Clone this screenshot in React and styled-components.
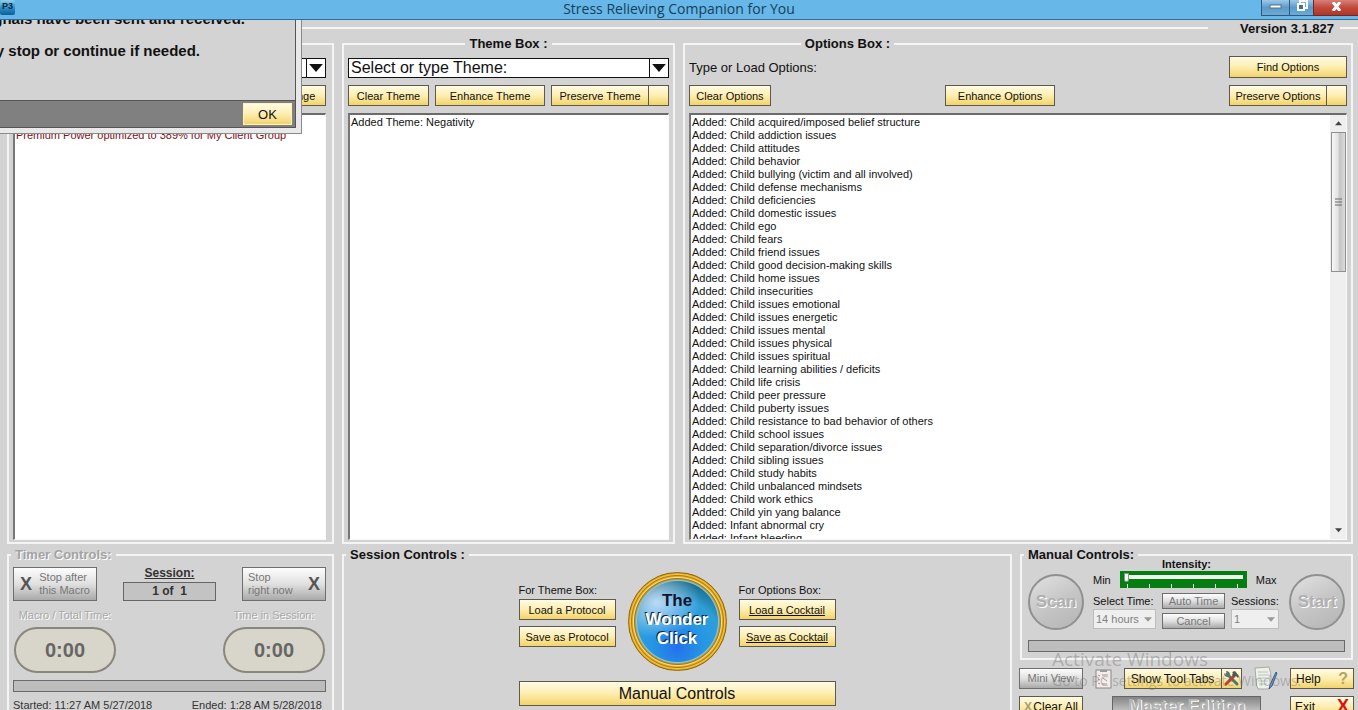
import React from "react";
import styled, { createGlobalStyle } from "styled-components";

const GlobalStyle = createGlobalStyle`
  * {
    box-sizing: border-box;
  }
  body {
    margin: 0;
    overflow: hidden;
    background: #d3d3d3;
    color: #111;
    font-family: "Liberation Sans", Arial, sans-serif;
    font-size: 11px;
  }
  button, input, select {
    font-family: inherit;
    font-size: inherit;
    color: inherit;
    margin: 0;
    border-radius: 0;
  }
`;

const Window = styled.div`
  position: relative;
  height: 100vh;
  overflow: hidden;
`;

const TitleBar = styled.header`
  display: grid;
  grid-template-columns: 1fr auto 1fr;
  height: 20px;
  background: #67b7e8;
  border-bottom: 1px solid #2f6f98;
`;

const Title = styled.h1`
  margin: 0;
  font: 400 14px/18px "Open Sans", sans-serif;
  color: #153f5a;
`;

const AppIcon = styled.div`
  width: 15px;
  height: 15px;
  border-radius: 2px;
  background: linear-gradient(#8fd0f0 0, #2a8cc4 55%, #0b5f96);
  color: #06263c;
  font: 700 9px/12px "Liberation Sans", sans-serif;
  text-align: center;
`;

const WindowButtons = styled.div`
  display: flex;
  justify-content: flex-end;
  height: 16px;
`;

const WindowButton = styled.button`
  display: flex;
  align-items: center;
  justify-content: center;
  width: ${(props) => props.$width}px;
  padding: 0 0 3px;
  border: 1px solid ${(props) => (props.$close ? "#6d2a25" : "#33597a")};
  border-top: 0;
  border-right-width: 0;
  background: ${(props) =>
    props.$close
      ? "linear-gradient(#d98078, #c14a3d 50%, #b03527)"
      : "linear-gradient(#9cc9e8, #5b9aca 50%, #6aabd8)"};
`;

const VersionRow = styled.div`
  display: flex;
  align-items: center;
  height: 16px;
`;

const Rule = styled.div`
  flex: ${(props) => (props.$width ? "none" : "1")};
  width: ${(props) => props.$width || 0}px;
  height: 2px;
  background: #f4f4f4;
`;

const Version = styled.strong`
  margin: 0 6px 0 32px;
  font-size: 13px;
`;

const Columns = styled.div`
  display: grid;
  grid-template-columns: minmax(0, 327fr) ${(props) => props.$rest};
  column-gap: 8px;
  align-items: start;
  padding: 0 5px 0 7px;
  margin-bottom: 3px;
`;

const Group = styled.fieldset`
  display: flex;
  flex-direction: column;
  min-width: 0;
  margin: 0;
  padding: ${(props) => props.$padding || "4px 4px 2px"};
  border: 2px solid #f4f4f4;
`;

const Legend = styled.legend`
  margin: ${(props) => props.$margin || "0 -2px"};
  padding: 0 4px;
  font-size: 13px;
  font-weight: 700;
  line-height: 16px;
  color: ${(props) => (props.$muted ? "#a3a3a3" : "#111")};
  text-shadow: ${(props) => (props.$muted ? "1px 1px #fff" : "none")};
`;

const Stack = styled.div`
  display: flex;
  flex-direction: column;
  gap: 7px;
`;

const Row = styled.div`
  display: flex;
  align-items: ${(props) => props.$align || "center"};
  justify-content: ${(props) => props.$justify || "space-between"};
  gap: ${(props) => props.$gap || 0}px;
`;

const ComboBox = styled.div`
  display: flex;
  height: 20px;
  margin-top: 2px;
  border: 1px solid #111;
  background: #fff;
  input {
    flex: 1;
    min-width: 0;
    padding: 0 2px;
    border: 0;
    font-size: 16px;
    line-height: 18px;
  }
  button {
    display: flex;
    align-items: center;
    justify-content: center;
    width: 19px;
    padding: 0;
    border: 0;
    border-left: 1px solid #111;
    background: #fff;
  }
`;

const Button = styled.button`
  display: flex;
  align-items: center;
  justify-content: ${(props) => props.$justify || "center"};
  flex: none;
  width: ${(props) => (props.$width ? props.$width + "px" : "auto")};
  height: ${(props) => props.$height || 21}px;
  padding: 0 ${(props) => props.$padding || 0}px;
  border: 1px solid #5c5a4c;
  background: linear-gradient(#fffbe6, #fdeeb0 50%, #f3d36a);
  font-size: ${(props) => props.$size || 11}px;
  text-decoration: ${(props) => (props.$underline ? "underline" : "none")};
  white-space: nowrap;
`;

const GreyButton = styled(Button)`
  border-color: #6e6e6e;
  background: linear-gradient(#fdfdfd, #e0e0e0 50%, #a9a9a9);
  color: #777;
  text-align: left;
  line-height: 13px;
`;

const Split = styled.div`
  display: flex;
  ${Button} + ${Button} {
    border-left: 0;
  }
`;

const Prompt = styled.span`
  font-size: 13px;
`;

const ListBox = styled.div`
  display: flex;
  height: 427px;
  overflow: hidden;
  border: 1px solid #fafafa;
  border-top: 2px solid #6b6b6b;
  border-left: 2px solid #777;
  background: #fff;
`;

const List = styled.ul`
  flex: 1;
  min-width: 0;
  margin: 0;
  padding: 1px;
  list-style: none;
  font-size: 11px;
  line-height: 13px;
  white-space: nowrap;
  color: ${(props) => props.$color || "#111"};
`;

const ScrollBar = styled.div`
  display: flex;
  flex-direction: column;
  align-items: center;
  width: 16px;
  background: #efefef;
`;

const ScrollArrow = styled.div`
  display: flex;
  align-items: center;
  justify-content: center;
  height: 17px;
`;

const ScrollThumb = styled.div`
  display: flex;
  align-items: center;
  justify-content: center;
  width: 15px;
  height: 140px;
  margin-bottom: auto;
  border: 1px solid #8f8f8f;
  background: linear-gradient(90deg, #f7f7f7, #e2e2e2 45%, #c4c4c4 60%, #dcdcdc);
`;

const SessionCount = styled.div`
  display: flex;
  flex-direction: column;
  align-items: center;
  gap: 3px;
  width: 93px;
  font-size: 12px;
  font-weight: 700;
  color: #333;
  line-height: 12px;
`;

const CountBox = styled.output`
  width: 100%;
  border: 1px solid #666;
  background: #c3c3c3;
  line-height: 17px;
  text-align: center;
`;

const Timer = styled.div`
  display: flex;
  flex-direction: column;
  align-items: center;
  gap: 5px;
  width: 104px;
`;

const TimerLabel = styled.span`
  line-height: 14px;
  color: #a8a8a8;
  text-shadow: 1px 1px #fff;
  white-space: nowrap;
`;

const TimerFace = styled.output`
  width: 102px;
  border: 2px solid #8b867b;
  border-radius: 23px;
  background: #d8d5ca;
  color: #666;
  font-size: 20px;
  font-weight: 700;
  line-height: 42px;
  text-align: center;
`;

const Progress = styled.div`
  height: 12px;
  border: 1px solid #6a6a6a;
  background: #bdbdbd;
`;

const Status = styled.div`
  display: flex;
  justify-content: space-between;
  padding-right: 4px;
  line-height: 12px;
  color: #333;
  white-space: nowrap;
`;

const SessionPanel = styled.div`
  display: flex;
  flex-direction: column;
  align-self: center;
  gap: 10px;
  padding-top: 5px;
`;

const Pair = styled.div`
  display: flex;
  flex-direction: column;
  gap: 6px;
  padding-top: 11px;
  span {
    margin-bottom: -4px;
    line-height: 14px;
  }
`;

const WonderButton = styled.button`
  width: 99px;
  height: 99px;
  padding: 0 0 4px;
  border: 1px solid #94690d;
  border-radius: 50%;
  background: radial-gradient(
      circle at 50% 50%,
      transparent 40px,
      #8fc8d4 41px,
      #a8780f 43px,
      #ffdf70 44px,
      #b57b0b 46px,
      #f7c63c 47px,
      #c8920f 49px
    ),
    radial-gradient(
      ellipse 44px 36px at 28% 30%,
      rgba(225, 235, 255, 0.8),
      rgba(200, 225, 255, 0)
    ),
    radial-gradient(circle at 50% 76%, #2470ec 0, #2597e4 26px, #2f9fd8 46px, #15647c 68px);
  color: #fff;
  font-size: 17px;
  font-weight: 700;
  line-height: 19px;
  text-shadow: -1px -1px #123;
  em {
    color: #10142c;
    font-style: normal;
    text-shadow: none;
  }
`;

const RoundButton = styled.button`
  width: 56px;
  height: 56px;
  padding: 0;
  border: 2px solid #909090;
  border-radius: 50%;
  background: linear-gradient(150deg, #e2e2e2, #c6c6c6 50%, #b4b4b4);
  color: #b0b0b0;
  font-size: 17px;
  font-weight: 700;
  text-shadow: 1px 1px #fff;
`;

const ManualGrid = styled.div`
  display: grid;
  grid-template-columns: 56px auto 56px;
  align-items: end;
  justify-content: space-between;
  margin-bottom: 3px;
`;

const ManualMiddle = styled.div`
  display: flex;
  flex-direction: column;
  width: 187px;
  margin-top: -5px;
  padding-bottom: 1px;
`;

const IntensityLabel = styled.label`
  align-self: center;
  font-weight: 700;
  line-height: 13px;
`;

const Slider = styled.input`
  appearance: none;
  width: 127px;
  height: 17px;
  margin: 0;
  padding: 0 4px 6px;
  background: repeating-linear-gradient(90deg, #e8f4e8 0 1px, transparent 1px 22px) 7px 100% / 112px 4px no-repeat, #067d10;
  &::-webkit-slider-runnable-track {
    height: 4px;
    background: #eef3ee;
  }
  &::-webkit-slider-thumb {
    appearance: none;
    width: 5px;
    height: 9px;
    margin-top: -2px;
    border-radius: 1px 1px 3px 3px;
    background: #f4f4f4;
    border: 1px solid #8a9a8a;
  }
`;

const Scale = styled.div`
  display: flex;
  align-items: center;
  gap: 9px;
`;

const Settings = styled.div`
  display: grid;
  grid-template-columns: 63px 63px 48px;
  column-gap: 6px;
  margin-top: 5px;
`;

const Setting = styled.div`
  display: flex;
  flex-direction: column;
  gap: ${(props) => props.$gap || 0}px;
  label {
    line-height: 16px;
    white-space: nowrap;
  }
`;

const SelectBox = styled.div`
  position: relative;
  select {
    appearance: none;
    display: block;
    width: 100%;
    height: 20px;
    padding: 0 2px;
    border: 1px solid #bdbdbd;
    background: #efefef;
    color: #808080;
    opacity: 1;
  }
  svg {
    position: absolute;
    right: 4px;
    top: 8px;
    pointer-events: none;
  }
`;

const Tools = styled.div`
  display: grid;
  grid-template-columns: 64px auto 64px;
  justify-content: space-between;
  align-items: center;
  row-gap: 5px;
  margin: 6px -1px 0;
`;

const ToolIcon = styled.button`
  display: flex;
  padding: 0;
  border: 0;
  background: none;
`;

const Edition = styled.div`
  justify-self: center;
  width: 149px;
  height: 21px;
  border: 1px solid #666;
  background: linear-gradient(#858585, #d8d8d8);
  color: #b4b4b4;
  font-size: 17px;
  font-weight: 700;
  line-height: 17px;
  text-align: center;
  text-shadow: 1px 1px #fff;
`;

const Dialog = styled.section`
  position: absolute;
  top: 20px;
  left: 0;
  width: 302px;
  height: 114px;
  overflow: hidden;
  padding: 0 5px 5px 0;
  border-right: 1px solid #8a8a8a;
  border-bottom: 1px solid #8a8a8a;
  background: #e9e9e9;
`;

const DialogBody = styled.div`
  display: flex;
  flex-direction: column;
  justify-content: flex-end;
  height: 108px;
  border-right: 1px solid #555;
  border-bottom: 1px solid #555;
  background: #d3d3d3;
`;

const DialogText = styled.p`
  display: flex;
  flex: none;
  justify-content: flex-end;
  width: ${(props) => props.$width}px;
  margin: 0 0 ${(props) => props.$space}px;
  font-size: 15px;
  font-weight: 700;
  line-height: 16px;
  white-space: nowrap;
`;

const DialogActions = styled.div`
  display: flex;
  justify-content: flex-end;
  flex: none;
  padding: 2px 3px;
  border-top: 1px solid #555;
  background: #808080;
`;

const OkButton = styled(Button)`
  border-color: #fff3b8;
`;

const Watermark = styled.div`
  position: absolute;
  top: 648px;
  right: 48px;
  width: 258px;
  color: rgba(110, 110, 110, 0.4);
  font: 14px/22px "Open Sans", sans-serif;
  white-space: nowrap;
  pointer-events: none;
  strong {
    display: block;
    font-size: 19px;
    font-weight: 400;
    line-height: 22px;
  }
`;

const Mark = styled.b`
  font-size: ${(props) => props.$size || 18}px;
  color: ${(props) => props.$color};
`;

const options = [
  "Child acquired/imposed belief structure",
  "Child addiction issues",
  "Child attitudes",
  "Child behavior",
  "Child bullying (victim and all involved)",
  "Child defense mechanisms",
  "Child deficiencies",
  "Child domestic issues",
  "Child ego",
  "Child fears",
  "Child friend issues",
  "Child good decision-making skills",
  "Child home issues",
  "Child insecurities",
  "Child issues emotional",
  "Child issues energetic",
  "Child issues mental",
  "Child issues physical",
  "Child issues spiritual",
  "Child learning abilities / deficits",
  "Child life crisis",
  "Child peer pressure",
  "Child puberty issues",
  "Child resistance to bad behavior of others",
  "Child school issues",
  "Child separation/divorce issues",
  "Child sibling issues",
  "Child study habits",
  "Child unbalanced mindsets",
  "Child work ethics",
  "Child yin yang balance",
  "Infant abnormal cry",
  "Infant bleeding",
];

const Triangle = ({ size = 12, up, color = "#111" }) => (
  <svg width={size} height={size / 2 + 1} viewBox="0 0 12 7">
    <path d={up ? "M0 7 6 0 12 7Z" : "M0 0h12L6 7Z"} fill={color} />
  </svg>
);

const Combo = ({ label, value }) => (
  <ComboBox>
    <input type="text" aria-label={label} defaultValue={value} />
    <button aria-label={"Open " + label}>
      <Triangle size={14} />
    </button>
  </ComboBox>
);

const ClipboardIcon = () => (
  <svg width="17" height="20" viewBox="0 0 17 20">
    <rect x="1" y="1" width="15" height="18" fill="#f2ecec" stroke="#8d8585" />
    <path d="M5 1h7v2H5Z" fill="#999" />
    <path d="M3 6l2 1M7 6h6M3 10l2 1M8 9l4 3M3 14l2 1M7 15h5" stroke="#b58d8d" />
  </svg>
);

const NotepadIcon = () => (
  <svg width="25" height="25" viewBox="0 0 25 25">
    <path d="M1 2 15 1q2 5 2 11v8q0 3-3 3H4q-2-3-2-9Z" fill="#eef1ea" stroke="#a4a9a4" />
    <path d="M4 6h10M4 9h11M4 12h11M4 15h10M5 18h8" stroke="#b8c4bc" />
    <path d="m22 6 1 1-5 13-3 3 1-4Z" fill="#6f97cf" stroke="#3c5d8e" />
  </svg>
);

const ToolsIcon = () => (
  <svg width="17" height="17" viewBox="0 0 17 17">
    <path d="M4 4 14 14" stroke="#4a7a70" strokeWidth="3" strokeLinecap="round" />
    <path d="M1 3q0 4 4 4l2-2q0-4-4-4l1 3-1 1Z" fill="#4a7a70" />
    <path d="M11 6 3 14" stroke="#c23c34" strokeWidth="3" strokeLinecap="round" />
    <path d="m9 2 3-1 4 5-1 2-2-2-2 1-2-2 1-2Z" fill="#4f5a58" />
  </svg>
);

const App = () => {
  return (
    <Window>
      <GlobalStyle />
      <TitleBar>
        <AppIcon>P3</AppIcon>
        <Title>Stress Relieving Companion for You</Title>
        <WindowButtons>
          <WindowButton $width={28} aria-label="Minimize">
            <svg width="13" height="5">
              <rect x="1" y="1" width="11" height="3" fill="#fff" stroke="#55708a" strokeWidth="1" />
            </svg>
          </WindowButton>
          <WindowButton $width={24} aria-label="Restore">
            <svg width="12" height="12" viewBox="0 0 12 12">
              <path d="M4 3V1h7v7H9" fill="none" stroke="#fff" strokeWidth="2" />
              <rect x="2" y="4" width="6" height="6" fill="#4b6f90" stroke="#fff" strokeWidth="2" />
            </svg>
          </WindowButton>
          <WindowButton $width={45} $close aria-label="Close">
            <svg width="11" height="9" viewBox="0 0 11 9">
              <path d="m2 0 7 9M9 0 2 9" stroke="#fff" strokeWidth="3" />
            </svg>
          </WindowButton>
        </WindowButtons>
      </TitleBar>

      <VersionRow>
        <Rule />
        <Version>Version 3.1.827</Version>
        <Rule $width={18} />
      </VersionRow>

      <Columns $rest="minmax(0, 333fr) minmax(0, 670fr)">
        <Group $padding="4px 6px 2px 4px">
          <Legend $margin="0 auto">Client Box :</Legend>
          <Stack>
            <Combo label="Client" value="" />
            <Row $justify="flex-end">
              <Button $width={60}>Change</Button>
            </Row>
            <ListBox>
              <List $color="#7d1020">
                <li>&nbsp;</li>
                <li>Premium Power optimized to 389% for My Client Group</li>
              </List>
            </ListBox>
          </Stack>
        </Group>

        <Group>
          <Legend $margin="0 auto">Theme Box :</Legend>
          <Stack>
            <Combo label="Theme" value="Select or type Theme:" />
            <Row>
              <Button $width={81}>Clear Theme</Button>
              <Button $width={110}>Enhance Theme</Button>
              <Split>
                <Button $width={98}>Preserve Theme</Button>
                <Button $width={20} aria-label="More theme choices" />
              </Split>
            </Row>
            <ListBox>
              <List>
                <li>Added Theme: Negativity</li>
              </List>
            </ListBox>
          </Stack>
        </Group>

        <Group>
          <Legend $margin="0 17%">Options Box :</Legend>
          <Stack>
            <Row>
              <Prompt>Type or Load Options:</Prompt>
              <Button $width={118} $height={22}>Find Options</Button>
            </Row>
            <Row>
              <Button $width={82}>Clear Options</Button>
              <Button $width={110}>Enhance Options</Button>
              <Split>
                <Button $width={98}>Preserve Options</Button>
                <Button $width={20} aria-label="More option choices" />
              </Split>
            </Row>
            <ListBox>
              <List>
                {options.map((name) => (
                  <li key={name}>Added: {name}</li>
                ))}
              </List>
              <ScrollBar>
                <ScrollArrow>
                  <Triangle size={7} up color="#444" />
                </ScrollArrow>
                <ScrollThumb>
                  <svg width="7" height="8">
                    <path d="M0 1h7M0 4h7M0 7h7" stroke="#666" />
                  </svg>
                </ScrollThumb>
                <ScrollArrow>
                  <Triangle size={7} color="#444" />
                </ScrollArrow>
              </ScrollBar>
            </ListBox>
          </Stack>
        </Group>
      </Columns>

      <Columns $rest="minmax(0, 670fr) minmax(0, 333fr)">
        <Group $padding="4px 6px 2px 4px">
          <Legend $muted>Timer Controls:</Legend>
          <Stack>
            <Row>
              <GreyButton $width={84} $height={34} $padding={6} $justify="space-between">
                <Mark $color="#555">X</Mark>
                <span>Stop after<br />this Macro</span>
              </GreyButton>
              <SessionCount>
                <u>Session:</u>
                <CountBox>1 of&nbsp; 1</CountBox>
              </SessionCount>
              <GreyButton $width={84} $height={34} $padding={5} $justify="space-between">
                <span>Stop<br />right now</span>
                <Mark $color="#555">X</Mark>
              </GreyButton>
            </Row>
            <Row>
              <Timer>
                <TimerLabel>Macro / Total Time:</TimerLabel>
                <TimerFace>0:00</TimerFace>
              </Timer>
              <Timer>
                <TimerLabel>Time in Session:</TimerLabel>
                <TimerFace>0:00</TimerFace>
              </Timer>
            </Row>
            <Progress />
            <Status>
              <span>Started: 11:27 AM 5/27/2018</span>
              <span>Ended: 1:28 AM 5/28/2018</span>
            </Status>
          </Stack>
        </Group>

        <Group $padding="4px 4px 20px">
          <Legend>Session Controls :</Legend>
          <SessionPanel>
            <Row $gap={12} $align="flex-start">
              <Pair>
                <span>For Theme Box:</span>
                <Button $width={97}>Load a Protocol</Button>
                <Button $width={97}>Save as Protocol</Button>
              </Pair>
              <WonderButton>
                <em>The</em>
                <br />
                Wonder
                <br />
                Click
              </WonderButton>
              <Pair>
                <span>For Options Box:</span>
                <Button $width={97} $underline>Load a Cocktail</Button>
                <Button $width={97} $underline>Save as Cocktail</Button>
              </Pair>
            </Row>
            <Button $height={25} $size={16}>Manual Controls</Button>
          </SessionPanel>
        </Group>

        <div>
          <Group $padding="0 6px 6px">
            <Legend $margin="0 -4px">Manual Controls:</Legend>
            <Stack>
              <ManualGrid>
                <RoundButton disabled>Scan</RoundButton>
                <ManualMiddle>
                  <IntensityLabel htmlFor="intensity">Intensity:</IntensityLabel>
                  <Scale>
                    <span>Min</span>
                    <Slider id="intensity" type="range" min="0" max="5" defaultValue="0" />
                    <span>Max</span>
                  </Scale>
                  <Settings>
                    <Setting>
                      <label htmlFor="time">Select Time:</label>
                      <SelectBox>
                        <select id="time" disabled>
                          <option>14 hours</option>
                        </select>
                        <Triangle size={8} color="#999" />
                      </SelectBox>
                    </Setting>
                    <Setting $gap={4}>
                      <GreyButton $width={63} $height={16}>Auto Time</GreyButton>
                      <GreyButton $width={63} $height={16}>Cancel</GreyButton>
                    </Setting>
                    <Setting>
                      <label htmlFor="sessions">Sessions:</label>
                      <SelectBox>
                        <select id="sessions" disabled>
                          <option>1</option>
                        </select>
                        <Triangle size={8} color="#999" />
                      </SelectBox>
                    </Setting>
                  </Settings>
                </ManualMiddle>
                <RoundButton disabled>Start</RoundButton>
              </ManualGrid>
              <Progress />
            </Stack>
          </Group>
          <Tools>
            <GreyButton $width={64} $justify="center">Mini View</GreyButton>
            <Row $gap={12}>
              <ToolIcon aria-label="Clipboard"><ClipboardIcon /></ToolIcon>
              <Split>
                <Button $width={98} $size={12}>Show Tool Tabs</Button>
                <Button $width={20} aria-label="Tools"><ToolsIcon /></Button>
              </Split>
              <ToolIcon aria-label="Notes"><NotepadIcon /></ToolIcon>
            </Row>
            <Button $width={64} $padding={5} $size={12} $justify="space-between">
              Help <Mark $color="#b3a468" $size={16}>?</Mark>
            </Button>
            <Button $width={64} $padding={4} $size={12} $justify="space-between">
              <Mark $color="#a89f70" $size={12}>X</Mark> Clear All
            </Button>
            <Edition>Master Edition</Edition>
            <Button $width={64} $padding={4} $size={12} $justify="space-between">
              Exit <Mark $color="#e01010">X</Mark>
            </Button>
          </Tools>
        </div>
      </Columns>

      <Dialog role="dialog" aria-label="Session message">
        <DialogBody>
          <DialogText $width={245} $space={16}>
            All signals have been sent and received.
          </DialogText>
          <DialogText $width={200} $space={41}>
            You may stop or continue if needed.
          </DialogText>
          <DialogActions>
            <OkButton $width={49} $height={22} $size={13}>OK</OkButton>
          </DialogActions>
        </DialogBody>
      </Dialog>

      <Watermark>
        <strong>Activate Windows</strong>
        Go to PC settings to activate Windows.
      </Watermark>
    </Window>
  );
};

export default App;
